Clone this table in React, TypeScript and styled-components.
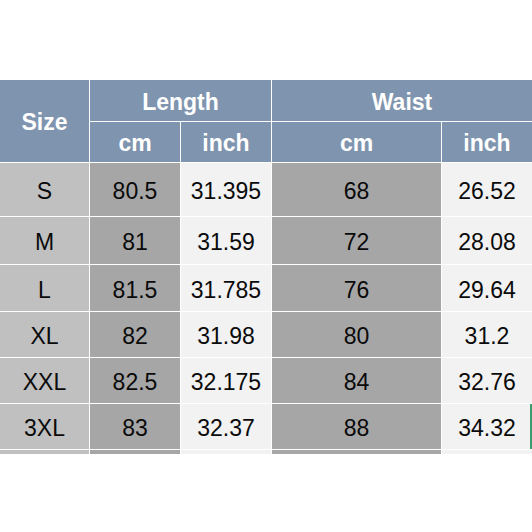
import React from "react";
import styled, { createGlobalStyle } from "styled-components";

const Global = createGlobalStyle`
  html, body { margin: 0; padding: 0; background: #ffffff; }
  body { font-family: "Liberation Sans", Arial, sans-serif; }
`;

const Page = styled.div`
  width: 532px;
  height: 532px;
  padding-top: 80px;
  box-sizing: border-box;
  background: #ffffff;
  overflow: hidden;
`;

const Table = styled.div`
  display: grid;
  grid-template-columns: 89px 90px 90px 169px 90px;
  grid-template-rows: 41px 40px 53px 47px 46px 45px 45px 45px 4px;
  gap: 1px;
  background: #ffffff;
`;

const Head = styled.div<{ $row?: string; $col?: string }>`
  grid-row: ${(p) => p.$row || "auto"};
  grid-column: ${(p) => p.$col || "auto"};
  background: #7f94ae;
  color: #ffffff;
  font-weight: bold;
  font-size: 23px;
  display: flex;
  align-items: center;
  justify-content: center;
  padding-top: 3px;
  box-sizing: border-box;
`;

type Tone = "size" | "cm" | "inch";
const tones: Record<Tone, string> = {
  size: "#c0c0c0",
  cm: "#a6a6a6",
  inch: "#f2f2f2",
};

const Cell = styled.div<{ $tone: Tone; $edge?: boolean }>`
  background: ${(p) => tones[p.$tone]};
  color: #0a0a0a;
  font-size: 23px;
  display: flex;
  align-items: center;
  justify-content: center;
  padding-top: 4px;
  box-sizing: border-box;
  box-shadow: ${(p) => (p.$edge ? "inset -2px 0 0 #3c9c6c" : "none")};
`;

const rows = [
  ["S", "80.5", "31.395", "68", "26.52"],
  ["M", "81", "31.59", "72", "28.08"],
  ["L", "81.5", "31.785", "76", "29.64"],
  ["XL", "82", "31.98", "80", "31.2"],
  ["XXL", "82.5", "32.175", "84", "32.76"],
  ["3XL", "83", "32.37", "88", "34.32"],
];

const toneOf: Tone[] = ["size", "cm", "inch", "cm", "inch"];

export default function App() {
  return (
    <Page>
      <Global />
      <Table>
        <Head $row="1 / span 2" $col="1">Size</Head>
        <Head $row="1" $col="2 / span 2">Length</Head>
        <Head $row="1" $col="4 / span 2">Waist</Head>
        <Head>cm</Head>
        <Head>inch</Head>
        <Head>cm</Head>
        <Head>inch</Head>
        {rows.map((r, i) =>
          r.map((v, j) => (
            <Cell
              key={`${i}-${j}`}
              $tone={toneOf[j]}
              $edge={i === rows.length - 1 && j === 4}
            >
              {v}
            </Cell>
          ))
        )}
        {toneOf.map((t, j) => (
          <Cell key={`strip-${j}`} $tone={t} />
        ))}
      </Table>
    </Page>
  );
}
